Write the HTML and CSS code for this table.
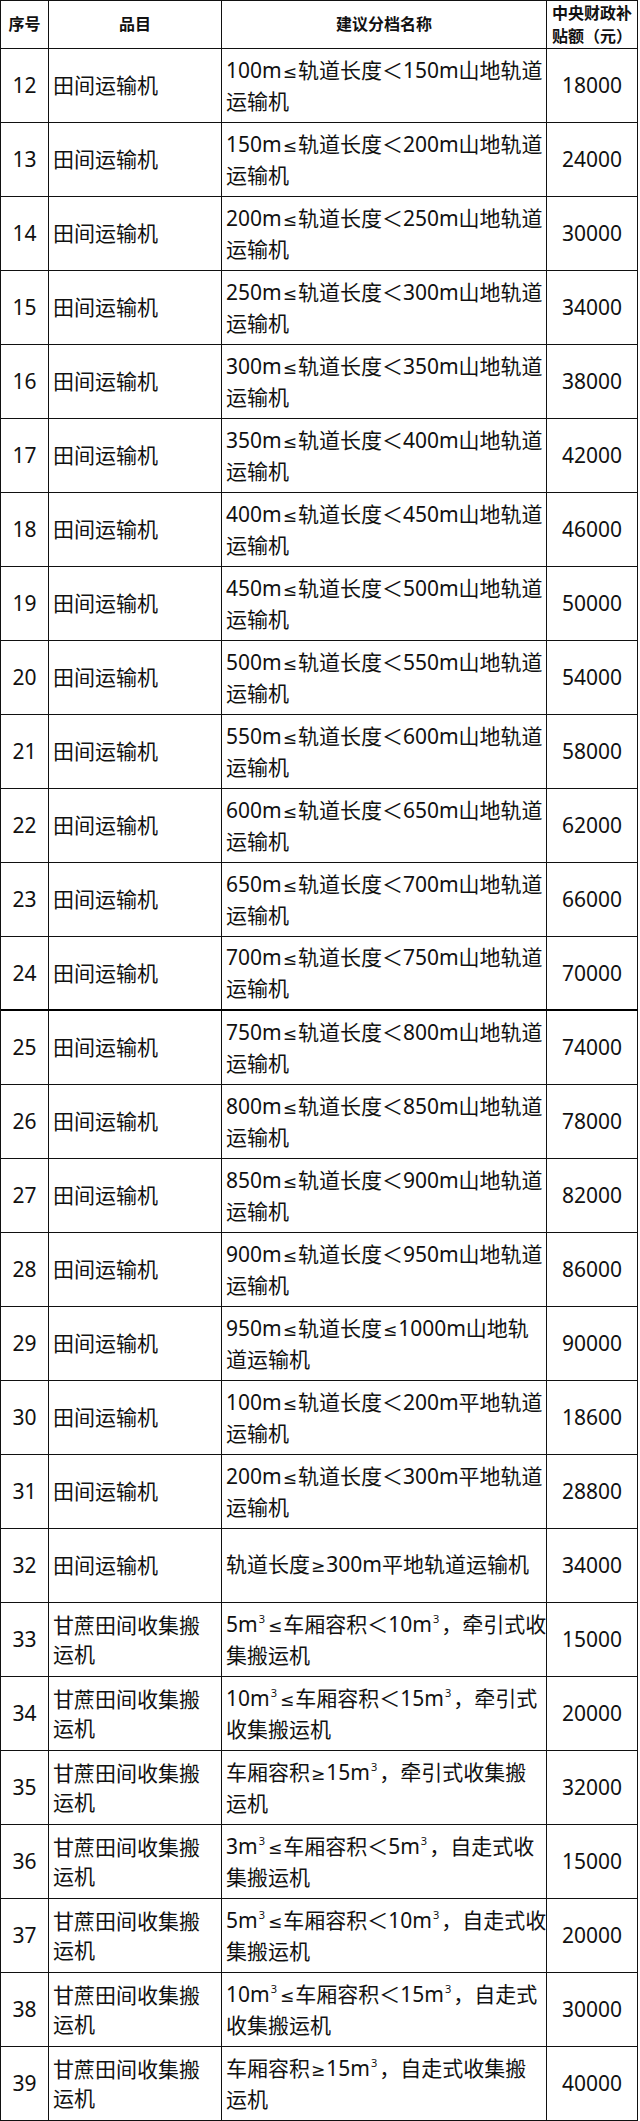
FILE: index.html
```html
<!DOCTYPE html>
<html lang="zh-CN">
<head>
<meta charset="utf-8">
<title>田间运输机补贴</title>
<link rel="stylesheet" href="styles.css">
</head>
<body>
<div class="table">
  <div class="row head">
    <div class="c c1"><span>序号</span></div>
    <div class="c c2"><span>品目</span></div>
    <div class="c c3"><span>建议分档名称</span></div>
    <div class="c c4"><span>中央财政补<br>贴额（元）</span></div>
  </div>
  <div class="row"><div class="c c1">12</div><div class="c c2"><span>田间运输机</span></div><div class="c c3"><span>100m<i class="op">≤</i>轨道长度＜150m山地轨道<br>运输机</span></div><div class="c c4">18000</div></div>
  <div class="row"><div class="c c1">13</div><div class="c c2"><span>田间运输机</span></div><div class="c c3"><span>150m<i class="op">≤</i>轨道长度＜200m山地轨道<br>运输机</span></div><div class="c c4">24000</div></div>
  <div class="row"><div class="c c1">14</div><div class="c c2"><span>田间运输机</span></div><div class="c c3"><span>200m<i class="op">≤</i>轨道长度＜250m山地轨道<br>运输机</span></div><div class="c c4">30000</div></div>
  <div class="row"><div class="c c1">15</div><div class="c c2"><span>田间运输机</span></div><div class="c c3"><span>250m<i class="op">≤</i>轨道长度＜300m山地轨道<br>运输机</span></div><div class="c c4">34000</div></div>
  <div class="row"><div class="c c1">16</div><div class="c c2"><span>田间运输机</span></div><div class="c c3"><span>300m<i class="op">≤</i>轨道长度＜350m山地轨道<br>运输机</span></div><div class="c c4">38000</div></div>
  <div class="row"><div class="c c1">17</div><div class="c c2"><span>田间运输机</span></div><div class="c c3"><span>350m<i class="op">≤</i>轨道长度＜400m山地轨道<br>运输机</span></div><div class="c c4">42000</div></div>
  <div class="row"><div class="c c1">18</div><div class="c c2"><span>田间运输机</span></div><div class="c c3"><span>400m<i class="op">≤</i>轨道长度＜450m山地轨道<br>运输机</span></div><div class="c c4">46000</div></div>
  <div class="row"><div class="c c1">19</div><div class="c c2"><span>田间运输机</span></div><div class="c c3"><span>450m<i class="op">≤</i>轨道长度＜500m山地轨道<br>运输机</span></div><div class="c c4">50000</div></div>
  <div class="row"><div class="c c1">20</div><div class="c c2"><span>田间运输机</span></div><div class="c c3"><span>500m<i class="op">≤</i>轨道长度＜550m山地轨道<br>运输机</span></div><div class="c c4">54000</div></div>
  <div class="row"><div class="c c1">21</div><div class="c c2"><span>田间运输机</span></div><div class="c c3"><span>550m<i class="op">≤</i>轨道长度＜600m山地轨道<br>运输机</span></div><div class="c c4">58000</div></div>
  <div class="row"><div class="c c1">22</div><div class="c c2"><span>田间运输机</span></div><div class="c c3"><span>600m<i class="op">≤</i>轨道长度＜650m山地轨道<br>运输机</span></div><div class="c c4">62000</div></div>
  <div class="row"><div class="c c1">23</div><div class="c c2"><span>田间运输机</span></div><div class="c c3"><span>650m<i class="op">≤</i>轨道长度＜700m山地轨道<br>运输机</span></div><div class="c c4">66000</div></div>
  <div class="row thick"><div class="c c1">24</div><div class="c c2"><span>田间运输机</span></div><div class="c c3"><span>700m<i class="op">≤</i>轨道长度＜750m山地轨道<br>运输机</span></div><div class="c c4">70000</div></div>
  <div class="row"><div class="c c1">25</div><div class="c c2"><span>田间运输机</span></div><div class="c c3"><span>750m<i class="op">≤</i>轨道长度＜800m山地轨道<br>运输机</span></div><div class="c c4">74000</div></div>
  <div class="row"><div class="c c1">26</div><div class="c c2"><span>田间运输机</span></div><div class="c c3"><span>800m<i class="op">≤</i>轨道长度＜850m山地轨道<br>运输机</span></div><div class="c c4">78000</div></div>
  <div class="row"><div class="c c1">27</div><div class="c c2"><span>田间运输机</span></div><div class="c c3"><span>850m<i class="op">≤</i>轨道长度＜900m山地轨道<br>运输机</span></div><div class="c c4">82000</div></div>
  <div class="row"><div class="c c1">28</div><div class="c c2"><span>田间运输机</span></div><div class="c c3"><span>900m<i class="op">≤</i>轨道长度＜950m山地轨道<br>运输机</span></div><div class="c c4">86000</div></div>
  <div class="row"><div class="c c1">29</div><div class="c c2"><span>田间运输机</span></div><div class="c c3"><span>950m<i class="op">≤</i>轨道长度<i class="op">≤</i>1000m山地轨<br>道运输机</span></div><div class="c c4">90000</div></div>
  <div class="row"><div class="c c1">30</div><div class="c c2"><span>田间运输机</span></div><div class="c c3"><span>100m<i class="op">≤</i>轨道长度＜200m平地轨道<br>运输机</span></div><div class="c c4">18600</div></div>
  <div class="row"><div class="c c1">31</div><div class="c c2"><span>田间运输机</span></div><div class="c c3"><span>200m<i class="op">≤</i>轨道长度＜300m平地轨道<br>运输机</span></div><div class="c c4">28800</div></div>
  <div class="row"><div class="c c1">32</div><div class="c c2"><span>田间运输机</span></div><div class="c c3"><span>轨道长度<i class="op">≥</i>300m平地轨道运输机</span></div><div class="c c4">34000</div></div>
  <div class="row"><div class="c c1">33</div><div class="c c2"><span>甘蔗田间收集搬<br>运机</span></div><div class="c c3"><span>5m<sup>3</sup><i class="op">≤</i>车厢容积＜10m<sup>3</sup>，牵引式收<br>集搬运机</span></div><div class="c c4">15000</div></div>
  <div class="row"><div class="c c1">34</div><div class="c c2"><span>甘蔗田间收集搬<br>运机</span></div><div class="c c3"><span>10m<sup>3</sup><i class="op">≤</i>车厢容积＜15m<sup>3</sup>，牵引式<br>收集搬运机</span></div><div class="c c4">20000</div></div>
  <div class="row"><div class="c c1">35</div><div class="c c2"><span>甘蔗田间收集搬<br>运机</span></div><div class="c c3"><span>车厢容积<i class="op">≥</i>15m<sup>3</sup>，牵引式收集搬<br>运机</span></div><div class="c c4">32000</div></div>
  <div class="row"><div class="c c1">36</div><div class="c c2"><span>甘蔗田间收集搬<br>运机</span></div><div class="c c3"><span>3m<sup>3</sup><i class="op">≤</i>车厢容积＜5m<sup>3</sup>，自走式收<br>集搬运机</span></div><div class="c c4">15000</div></div>
  <div class="row"><div class="c c1">37</div><div class="c c2"><span>甘蔗田间收集搬<br>运机</span></div><div class="c c3"><span>5m<sup>3</sup><i class="op">≤</i>车厢容积＜10m<sup>3</sup>，自走式收<br>集搬运机</span></div><div class="c c4">20000</div></div>
  <div class="row"><div class="c c1">38</div><div class="c c2"><span>甘蔗田间收集搬<br>运机</span></div><div class="c c3"><span>10m<sup>3</sup><i class="op">≤</i>车厢容积＜15m<sup>3</sup>，自走式<br>收集搬运机</span></div><div class="c c4">30000</div></div>
  <div class="row"><div class="c c1">39</div><div class="c c2"><span>甘蔗田间收集搬<br>运机</span></div><div class="c c3"><span>车厢容积<i class="op">≥</i>15m<sup>3</sup>，自走式收集搬<br>运机</span></div><div class="c c4">40000</div></div>
</div>
</body>
</html>
```

FILE: styles.css
```css
* { box-sizing: border-box; }
html, body { margin: 0; padding: 0; background: #fff; }
body {
  font-family: "Noto Sans", "Noto Sans CJK SC", sans-serif;
  color: #111;
  width: 640px;
}
.table {
  width: 638px;
  border-left: 1px solid #111;
  border-top: 1px solid #111;
}
.row {
  display: grid;
  grid-template-columns: 48px 173px 325px 91px;
  height: 74px;
  border-bottom: 1px solid #111;
}
.row.head { height: 48px; }
.row.thick { border-bottom: 2px solid #000; }
.c {
  border-right: 1px solid #111;
  display: flex;
  align-items: center;
  font-size: 21px;
  line-height: 29px;
  white-space: nowrap;
  overflow: hidden;
}
.c1, .c4 { justify-content: center; text-align: center; }
.c2, .c3 { padding-left: 4px; }
.head .c {
  justify-content: center;
  text-align: center;
  font-size: 16px;
  font-weight: bold;
  line-height: 23px;
  padding-left: 0;
}
.op {
  font-style: normal;
  font-family: "DejaVu Sans", "Liberation Sans", sans-serif;
  font-size: 17px;
  margin: 0 1px;
}
sup {
  font-size: 11px;
  line-height: 0;
  vertical-align: 9px;
  margin: 0 2px 0 1px;
}
```
